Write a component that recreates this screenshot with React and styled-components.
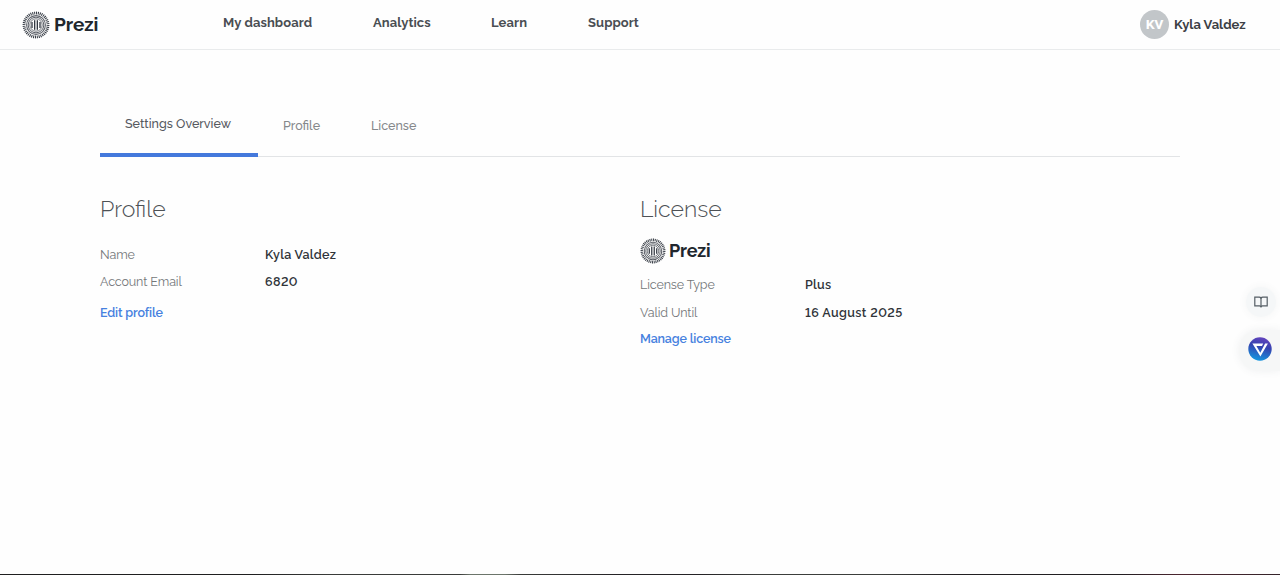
import React from "react"
import styled, { createGlobalStyle } from "styled-components"

const GlobalStyle = createGlobalStyle`
  * {
    box-sizing: border-box;
  }
  body {
    margin: 0;
    background: #fefefe;
    color: #3f4449;
    font-family: "Raleway", "Inter", sans-serif;
    font-size: 13px;
    font-variant-numeric: lining-nums;
  }
`

const Page = styled.div`
  min-height: 575px;
  display: flex;
  flex-direction: column;
`

const Header = styled.header`
  height: 50px;
  display: flex;
  align-items: center;
  padding: 0 33px 0 22px;
  border-bottom: 1px solid #e9ebec;
`

const Brand = styled.a`
  display: flex;
  align-items: center;
  gap: ${({ $small }) => ($small ? 3 : 4)}px;
  width: ${({ $small }) => ($small ? "auto" : "201px")};
  height: ${({ $small }) => ($small ? 26 : 28)}px;
  color: #20262d;
`

const BrandName = styled.span`
  font-size: ${({ $small }) => ($small ? 18 : 19)}px;
  font-weight: 700;
  letter-spacing: ${({ $small }) => ($small ? -0.15 : -0.05)}px;
  line-height: 24px;
  padding-bottom: 1px;
`

const Nav = styled.nav`
  display: grid;
  grid-template-columns: 150px 118px 97px auto;
  padding-bottom: 3px;
`

const NavLink = styled.a`
  color: #4a4e53;
  font-weight: 700;
  line-height: 20px;
  white-space: nowrap;
  letter-spacing: 0.08px;
`

const User = styled.div`
  display: flex;
  align-items: center;
  gap: 5px;
  margin-left: auto;
  color: #3c4045;
  font-weight: 700;
  white-space: nowrap;
`

const Avatar = styled.span`
  display: flex;
  align-items: center;
  justify-content: center;
  width: 29px;
  height: 29px;
  border-radius: 50%;
  background: #c2c6c9;
  color: #fff;
  font-weight: 800;
`

const UserName = styled.span`
  width: 73px;
`

const Main = styled.main`
  flex: 1;
  width: 1080px;
  margin: 0 auto;
  padding-top: 42px;
`

const Tabs = styled.div`
  display: flex;
  height: 65px;
  border-bottom: 1px solid #e2e4e6;
`

const Tab = styled.a`
  height: ${({ $active }) => ($active ? 65 : 64)}px;
  width: ${({ $width }) => $width}px;
  padding: ${({ $active }) => ($active ? 22 : 24)}px 0 0 25px;
  border-bottom: ${({ $active }) => ($active ? "4px solid #4479dc" : "none")};
  color: ${({ $active }) => ($active ? "#56595e" : "#85888b")};
  font-size: 12.5px;
  font-weight: 500;
  line-height: 20px;
  white-space: nowrap;
`

const Columns = styled.div`
  display: grid;
  grid-template-columns: 1fr 1fr;
  padding-top: 36px;
`

const Title = styled.h2`
  margin: 0;
  height: ${({ $height }) => $height}px;
  color: #4d5155;
  font-size: 23px;
  font-weight: 300;
  line-height: 32px;
`

const Details = styled.div`
  display: grid;
  grid-template-columns: 165px 1fr;
  grid-auto-rows: ${({ $rowHeight }) => $rowHeight}px;
  line-height: 20px;
  margin-top: ${({ $top }) => $top || 0}px;
`

const Label = styled.span`
  color: #74777a;
  font-size: 12.5px;
  font-weight: 400;
  letter-spacing: -0.12px;
`

const Value = styled.span`
  color: #303439;
  font-size: 12.5px;
  font-weight: 600;
  letter-spacing: ${({ $spacing }) => $spacing || 0.27}px;
`

const Action = styled.a`
  display: block;
  margin-top: ${({ $top }) => $top}px;
  color: #4681df;
  font-size: 12.5px;
  font-weight: 600;
  line-height: 20px;
  letter-spacing: -0.15px;
`

const ReaderButton = styled.button`
  position: fixed;
  top: 287px;
  right: 4px;
  display: flex;
  align-items: center;
  justify-content: center;
  width: 30px;
  height: 30px;
  padding: 0;
  border: 0;
  border-radius: 50%;
  background: #f5f7f8;
  box-shadow: 0 0 8px rgba(70, 80, 90, 0.06);
`

const Launcher = styled.button`
  position: fixed;
  top: 330px;
  right: 0;
  display: flex;
  align-items: center;
  width: 41px;
  height: 41px;
  padding: 0 0 4px 9px;
  border: 0;
  border-radius: 20px 0 0 20px;
  background: #f6f7f7;
  box-shadow: 0 0 8px rgba(70, 80, 90, 0.08);
`

const BottomEdge = styled.div`
  position: fixed;
  left: 0;
  right: 0;
  bottom: 0;
  height: 1px;
  background: linear-gradient(
    90deg,
    #1f1f20 0 250px,
    #3a3c3a 330px 460px,
    #6c756b 470px 505px,
    #3a3c3a 520px,
    #252326 620px 700px,
    #3c3e3c 760px 880px,
    #221f22 960px 1120px,
    #4c2630 1180px,
    #35242a
  );
`

const BARS = [
  [-4, 2.9],
  [-1.35, 4.8],
  [1.35, 4.8],
  [4, 2.9],
]

const Emblem = ({ size }) => (
  <svg width={size} height={size} viewBox="-14 -14 28 28" fill="none" stroke="#343a43">
    {/* outer ticks */}
    <circle r="12" strokeWidth="2.8" pathLength="80" strokeDasharray="1.1 0.9" />
    <circle r="9.4" strokeWidth="1.1" strokeOpacity="0.8" />
    <circle r="7.8" strokeWidth="1" strokeOpacity="0.8" />
    <circle r="6.2" strokeWidth="0.9" strokeOpacity="0.75" />
    {BARS.map(([x, y]) => (
      <path key={x} d={`M${x} ${-y}V${y}`} strokeWidth="1.35" />
    ))}
  </svg>
)

const Logo = ({ small }) => (
  <Brand $small={small}>
    <Emblem size={small ? 26 : 28} />
    <BrandName $small={small}>Prezi</BrandName>
  </Brand>
)

const BookIcon = () => (
  <svg width="14" height="12" viewBox="0 0 14 12" fill="none" stroke="#555e65" strokeWidth="1.2">
    <path d="M7 2.1C6.6 1.4 6 1.1 5.2 1.1H.8v8.8h4.6c.8 0 1.3.3 1.6.9.3-.6.8-.9 1.6-.9h4.6V1.1H8.8C8 1.1 7.4 1.4 7 2.1Z" />
    <path d="M7 2v8.6" />
  </svg>
)

const LauncherIcon = () => (
  <svg width="24" height="24" viewBox="0 0 24 24">
    <defs>
      <linearGradient id="launcher" x1="0.65" y1="0" x2="0.4" y2="1">
        <stop offset="0" stopColor="#6544bd" />
        <stop offset="0.4" stopColor="#3543b0" />
        <stop offset="1" stopColor="#1597df" />
      </linearGradient>
    </defs>
    <circle cx="12" cy="12" r="11.7" fill="url(#launcher)" />
    {/* folded triangle: top bar with its left edge, then the right arm */}
    <path d="M4.4 6.6H15.2L14 9H8.4l3.9 6.8 4.8-9.2h2.8L12.4 19.4Z" fill="#fff" />
  </svg>
)

const App = () => (
  <Page>
    <GlobalStyle />
    <Header>
      <Logo />
      <Nav>
        <NavLink>My dashboard</NavLink>
        <NavLink>Analytics</NavLink>
        <NavLink>Learn</NavLink>
        <NavLink>Support</NavLink>
      </Nav>
      <User>
        <Avatar>KV</Avatar>
        <UserName>Kyla Valdez</UserName>
      </User>
    </Header>
    <Main>
      <Tabs>
        <Tab $active $width={158}>
          Settings Overview
        </Tab>
        <Tab $width={88}>Profile</Tab>
        <Tab $width={95}>License</Tab>
      </Tabs>
      <Columns>
        <section>
          <Title $height={52}>Profile</Title>
          <Details $rowHeight={27}>
            <Label>Name</Label>
            <Value>Kyla Valdez</Value>
            <Label>Account Email</Label>
            <Value $spacing={0.4}>6820</Value>
          </Details>
          <Action $top={4}>Edit profile</Action>
        </section>
        <section>
          <Title $height={45}>License</Title>
          <Logo small />
          <Details $top={11} $rowHeight={27.5}>
            <Label>License Type</Label>
            <Value>Plus</Value>
            <Label>Valid Until</Label>
            <Value $spacing={0.4}>16 August 2025</Value>
          </Details>
          <Action $top={-1}>Manage license</Action>
        </section>
      </Columns>
    </Main>
    <ReaderButton aria-label="Reader">
      <BookIcon />
    </ReaderButton>
    <Launcher aria-label="Assistant">
      <LauncherIcon />
    </Launcher>
    <BottomEdge />
  </Page>
)

export default App
